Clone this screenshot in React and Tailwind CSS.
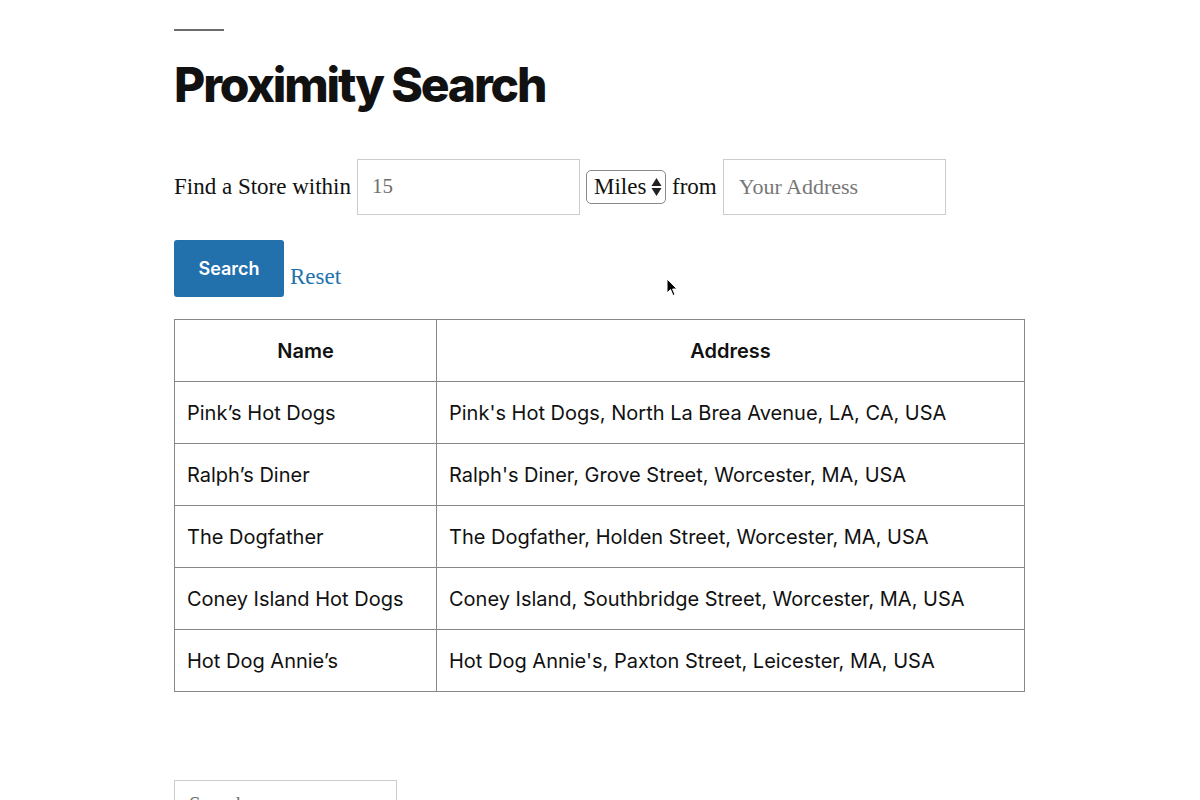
import React from "react";

const stores = [
  { name: "Pink’s Hot Dogs", address: "Pink's Hot Dogs, North La Brea Avenue, LA, CA, USA" },
  { name: "Ralph’s Diner", address: "Ralph's Diner, Grove Street, Worcester, MA, USA" },
  { name: "The Dogfather", address: "The Dogfather, Holden Street, Worcester, MA, USA" },
  { name: "Coney Island Hot Dogs", address: "Coney Island, Southbridge Street, Worcester, MA, USA" },
  { name: "Hot Dog Annie’s", address: "Hot Dog Annie's, Paxton Street, Leicester, MA, USA" },
];

const serif = "font-['Liberation_Serif',serif]";
const sans = "font-['Inter',sans-serif]";

export default function App() {
  return (
    <div className="relative h-[800px] overflow-hidden bg-white text-[#111]">
      <div className="ml-[174px] w-[851px] pt-[29px]">
        {/* Separator */}
        <div className="h-[2px] w-[50px] bg-[#6d6d6d]" />

        {/* Title */}
        <h1 className={`${sans} mt-[28px] text-[48px] font-extrabold leading-[1.1] tracking-[-0.045em]`}>
          Proximity Search
        </h1>

        {/* Search form */}
        <form className={`${serif} mt-[47px] text-[23px]`}>
          <div className="flex items-center">
            <span>Find a Store within</span>
            <input
              defaultValue="15"
              className={`${serif} ml-[6px] h-[56px] w-[223px] border border-[#cccccc] px-[14px] text-[21px] text-[#6d6d6d] outline-none`}
            />
            <div className="ml-[6px] flex h-[34px] w-[80px] items-center justify-between rounded-[5px] border border-[#8a8a8a] pl-[7px] pr-[3px]">
              <span>Miles</span>
              <svg width="11" height="20" viewBox="0 0 11 20">
                <path d="M5.5 1 L10.5 9 H0.5 Z" fill="#222" />
                <path d="M5.5 19 L10.5 11 H0.5 Z" fill="#222" />
              </svg>
            </div>
            <span className="ml-[6px]">from</span>
            <input
              placeholder="Your Address"
              className={`${serif} ml-[6px] h-[56px] w-[223px] border border-[#cccccc] px-[15px] text-[22px] outline-none placeholder:text-[#777]`}
            />
          </div>

          <div className="mt-[25px] flex items-end">
            <button
              type="button"
              className={`${sans} h-[57px] w-[110px] rounded-[3px] bg-[#2271ad] text-[18px] font-semibold text-white`}
            >
              Search
            </button>
            <a className="ml-[6px] mb-[2px] text-[#1f72ad]">Reset</a>
          </div>
        </form>

        {/* Results table */}
        <table className={`${sans} mt-[22px] w-full border-collapse text-[20px]`}>
          <thead>
            <tr className="h-[62px]">
              <th className="w-[262px] border border-[#888] pt-[1px] font-semibold">Name</th>
              <th className="border border-[#888] pt-[1px] font-semibold">Address</th>
            </tr>
          </thead>
          <tbody>
            {stores.map((s) => (
              <tr key={s.name} className="h-[62px]">
                <td className="border border-[#888] px-[12px] pt-[1px]">{s.name}</td>
                <td className="border border-[#888] px-[12px] pt-[1px]">{s.address}</td>
              </tr>
            ))}
          </tbody>
        </table>

        {/* Footer search field */}
        <div className="mt-[88px] h-[60px] w-[223px] border border-[#cccccc] px-[14px] pt-[8px]">
          <span className={`${serif} text-[21px] text-[#777]`}>Search …</span>
        </div>
      </div>

      {/* Mouse cursor */}
      <svg className="absolute left-[666px] top-[278px]" width="12" height="19" viewBox="0 0 12 19">
        <path d="M1 1 L1 15 L4.5 11.5 L7 17.5 L9 16.6 L6.6 11 L11 11 Z" fill="#000" stroke="#fff" strokeWidth="1" />
      </svg>
    </div>
  );
}
